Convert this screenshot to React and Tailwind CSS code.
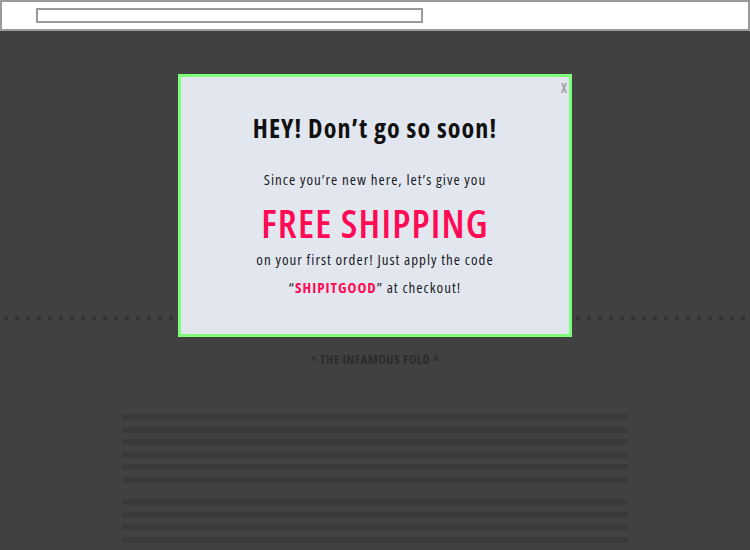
import React from 'react';

const font = { fontFamily: '"Open Sans", "DejaVu Sans", sans-serif' };

const Bars = ({ count }) => (
    <div className="flex flex-col gap-[6.6px]">
        {Array.from({ length: count }).map((_, i) => (
            <div key={i} className="h-[6px] bg-[#3a3a3a]" />
        ))}
    </div>
);

const Popup = () => (
    <div className="absolute left-[178px] top-[74px] w-[394px] h-[263px] border-[3px] border-[#7dff78] bg-[#e2e7ef] text-center text-[#1b1b26] font-stretch-condensed">
        <span className="absolute right-[2px] top-[0px] text-[14px] font-semibold text-[#9a9a9a]">X</span>
        <h2 className="mt-[34px] text-[26px] font-bold leading-[34px] tracking-[1.1px] text-[#111]">HEY! Don’t go so soon!</h2>
        <p className="mt-[24px] text-[15px] leading-[20px] tracking-[1px]">Since you’re new here, let’s give you</p>
        <p className="mt-[12px] text-[39px] font-semibold leading-[44px] tracking-[1.2px] text-[#ff0a54]">FREE SHIPPING</p>
        <p className="mt-[4px] text-[15px] leading-[20px] tracking-[1px]">on your first order! Just apply the code</p>
        <p className="mt-[8px] text-[15px] leading-[20px] tracking-[1px]">
            “<span className="font-bold text-[#ff0a54]">SHIPITGOOD</span>” at checkout!
        </p>
    </div>
);

export default function App() {
    return (
        <div className="relative w-[750px] h-[550px] overflow-hidden bg-[#414141]" style={font}>
            <div className="h-[31px] bg-white border-2 border-[#9a9a9a] pl-[34px] pt-[6px]">
                <div className="w-[387px] h-[15px] border-2 border-[#9a9a9a]" />
            </div>
            <div className="mt-[285px] ml-[4px] h-[4px] bg-[repeating-linear-gradient(90deg,#333_0_4px,transparent_4px_11px)]" />
            <p className="mt-[30px] text-center text-[13px] leading-[18px] font-bold tracking-[0.4px] text-[#2c2c2c] font-stretch-condensed">^ THE INFAMOUS FOLD ^</p>
            <div className="mt-[46px] ml-[122px] mr-[122px] flex flex-col gap-[16px]">
                <Bars count={6} />
                <Bars count={4} />
            </div>
            <Popup />
        </div>
    );
}
